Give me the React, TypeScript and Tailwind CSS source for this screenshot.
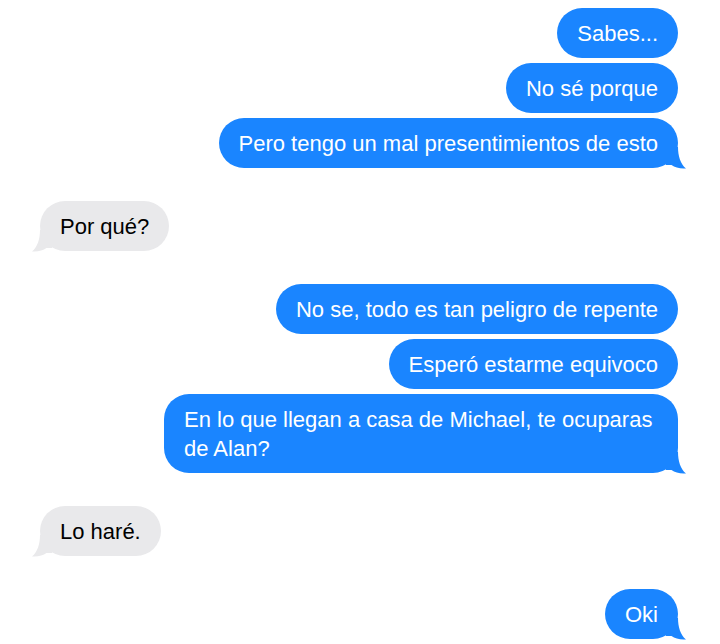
import React from 'react';

type Msg = { text: string; me: boolean };

const groups: Msg[][] = [
    [
        { text: 'Sabes...', me: true },
        { text: 'No sé porque', me: true },
        { text: 'Pero tengo un mal presentimientos de esto', me: true },
    ],
    [{ text: 'Por qué?', me: false }],
    [
        { text: 'No se, todo es tan peligro de repente', me: true },
        { text: 'Esperó estarme equivoco', me: true },
        { text: 'En lo que llegan a casa de Michael, te ocuparas de Alan?', me: true },
    ],
    [{ text: 'Lo haré.', me: false }],
    [{ text: 'Oki', me: true }],
];

function Tail({ me }: { me: boolean }) {
    return (
        <svg
            width="24"
            height="22"
            viewBox="0 0 24 22"
            className={me ? 'absolute right-[-8px] bottom-[-1px]' : 'absolute left-[-8px] bottom-[-1px] -scale-x-100'}
        >
            <path
                d="M4 0 L16 0 C16 9 18.5 17 24 21.5 C18 22 13 20.5 9.5 18 L4 18 Z"
                fill={me ? '#1a85ff' : '#e9e9eb'}
            />
        </svg>
    );
}

function Bubble({ msg, last }: { msg: Msg; last: boolean }) {
    return (
        <div
            className={
                'relative max-w-[514px] rounded-[25px] px-5 py-[10.5px] text-[22px] leading-[29px] ' +
                (msg.me ? 'bg-[#1a85ff] text-white' : 'bg-[#e9e9eb] text-black')
            }
        >
            {last && <Tail me={msg.me} />}
            <span className="relative">{msg.text}</span>
        </div>
    );
}

export default function App() {
    return (
        <div
            className="flex h-[644px] w-[720px] flex-col gap-[33px] overflow-hidden bg-white pl-10 pr-[42px] pt-2"
            style={{ fontFamily: '"Liberation Sans", Arial, sans-serif' }}
        >
            {groups.map((g, gi) => (
                <div key={gi} className={'flex flex-col gap-[5px] ' + (g[0].me ? 'items-end' : 'items-start')}>
                    {g.map((m, i) => (
                        <Bubble key={i} msg={m} last={i === g.length - 1} />
                    ))}
                </div>
            ))}
        </div>
    );
}
